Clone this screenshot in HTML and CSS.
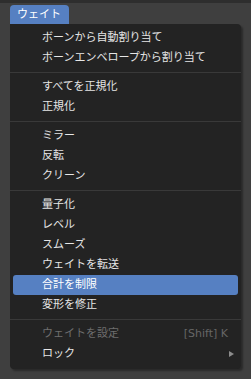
FILE: index.html
```html
<!DOCTYPE html>
<html lang="ja">
<head>
  <meta charset="UTF-8" />
  <title>ウェイト</title>
  <link rel="stylesheet" href="styles.css">
</head>
<body>
  <div class="topbar"></div>
  <div class="menu">
    <div class="tab">ウェイト</div>
    <div class="panel">
      <div class="item">ボーンから自動割り当て</div>
      <div class="item">ボーンエンベロープから割り当て</div>
      <div class="sep"></div>
      <div class="item">すべてを正規化</div>
      <div class="item">正規化</div>
      <div class="sep"></div>
      <div class="item">ミラー</div>
      <div class="item">反転</div>
      <div class="item">クリーン</div>
      <div class="sep"></div>
      <div class="item">量子化</div>
      <div class="item">レベル</div>
      <div class="item">スムーズ</div>
      <div class="item">ウェイトを転送</div>
      <div class="item active">合計を制限</div>
      <div class="item">変形を修正</div>
      <div class="sep"></div>
      <div class="item disabled">ウェイトを設定<span class="key">[Shift] K</span></div>
      <div class="item sub">ロック<span class="arrow"></span></div>
    </div>
  </div>
</body>
</html>
```

FILE: styles.css
```css
body {
  margin: 0;
  background: #3f3f3f;
  font-family: "DejaVu Sans", "Noto Sans CJK JP", sans-serif;
  font-size: 11px;
  color: #e6e6e6;
  height: 379px;
  overflow: hidden;
}

.topbar {
  height: 3px;
  background: #2e2e2e;
}

.menu {
  margin-left: 10px;
  padding-top: 2px;
  width: 231px;
}

.tab {
  width: 59px;
  height: 19px;
  line-height: 19px;
  box-sizing: border-box;
  padding-left: 7px;
  background: #5680c2;
  color: #fff;
  border-radius: 4px 4px 0 0;
}

.panel {
  background: #232323;
  border-radius: 0 4px 4px 4px;
  padding: 4px 0 5px;
  box-shadow: 2px 2px 2px rgba(0, 0, 0, 0.35);
}

.item {
  height: 20px;
  line-height: 20px;
  margin: 0 3px;
  padding: 0 10px 0 29px;
  display: flex;
  justify-content: space-between;
  align-items: center;
  border-radius: 3px;
  white-space: nowrap;
}

.item.active {
  background: #5680c2;
  color: #fff;
}

.item.disabled {
  color: #6e6e6e;
}

.key {
  color: #666;
}

.item.sub {
  padding-right: 4px;
}

.arrow {
  width: 0;
  height: 0;
  border-left: 5px solid #8c8c8c;
  border-top: 3px solid transparent;
  border-bottom: 3px solid transparent;
}

.sep {
  height: 1px;
  background: #393939;
  margin: 4px 0;
}
```
